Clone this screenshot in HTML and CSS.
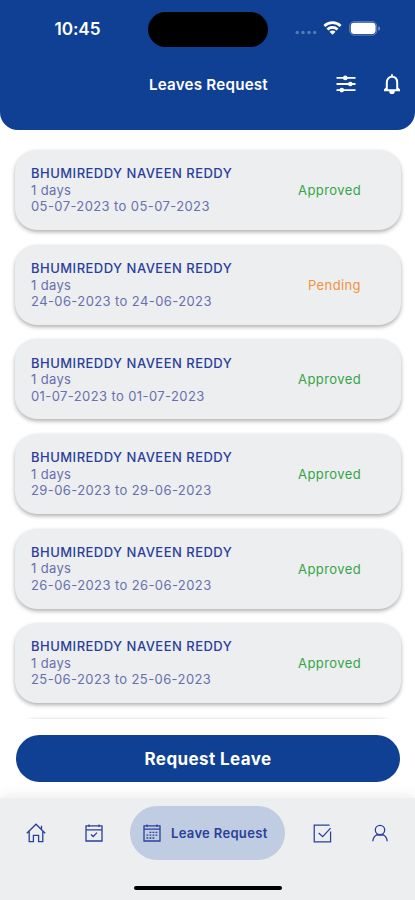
FILE: index.html
```html
<!DOCTYPE html>
<html lang="en">
<head>
    <meta charset="UTF-8">
    <meta name="viewport" content="width=device-width, initial-scale=1.0">
    <title>Leaves Request</title>
    <link rel="stylesheet" href="styles.css">
</head>
<body>

    <header class="header">
        <div class="status-bar">
            <span class="time">10:45</span>
            <div class="island"></div>
            <div class="status-icons">
                <svg class="signal" width="22" height="5" viewBox="0 0 22 5" fill="#fff" opacity=".3">
                    <circle cx="2.2" cy="2.5" r="1.7"/><circle cx="8" cy="2.5" r="1.7"/><circle cx="14" cy="2.5" r="1.7"/><circle cx="19.7" cy="2.5" r="1.7"/>
                </svg>
                <svg class="wifi" width="19" height="14" viewBox="0 0 20 15" fill="none" stroke="#fff" stroke-width="3">
                    <path d="M1.3 5.3a12.6 12.6 0 0 1 17.4 0"/>
                    <path d="M4.6 9a7.8 7.8 0 0 1 10.8 0"/>
                    <path d="M10 14.6 6.8 11.6a4.5 4.5 0 0 1 6.4 0z" fill="#fff" stroke="none"/>
                </svg>
                <svg class="battery" width="32" height="15" viewBox="0 0 32 15">
                    <rect x=".7" y=".7" width="27" height="13.4" rx="4.2" fill="none" stroke="#fff" stroke-opacity=".35"/>
                    <rect x="1.8" y="1.8" width="24.8" height="11.2" rx="3.4" fill="#fff"/>
                    <path d="M29.3 5.2v4.6c1-.4 1.6-1.2 1.6-2.3s-.6-1.9-1.6-2.3z" fill="#fff" opacity=".5"/>
                </svg>
            </div>
        </div>
        <div class="title-bar">
            <h1>Leaves Request</h1>
            <div class="actions">
                <svg width="20" height="18" viewBox="0 0 20 18" fill="#fff">
                    <path d="M.5 2h19v1.8H.5zM.5 8.1h19v1.8H.5zM.5 14.2h19V16H.5z"/>
                    <circle cx="9.3" cy="2.9" r="2.3"/><circle cx="14.3" cy="9" r="2.3"/><circle cx="5.8" cy="15.1" r="2.3"/>
                </svg>
                <svg width="18" height="22" viewBox="0 0 18 22" fill="none" stroke="#fff" stroke-width="2">
                    <path d="M1 17.2h16M3.8 16.8V9.7C3.8 6 6 3.8 9 3.8s5.2 2.2 5.2 5.9v7.1M2 17l2-2.4M16 17l-2-2.4"/>
                    <path d="M7.2 18.4h3.6a1.8 1.8 0 0 1-3.6 0zM9 1.2v2.6" stroke-width="1.8" fill="#fff"/>
                </svg>
            </div>
        </div>
    </header>

    <main class="leave-list">
        <div class="card">
            <div class="info">
                <h2>BHUMIREDDY NAVEEN REDDY</h2>
                <p class="days">1 days</p>
                <p>05-07-2023 to 05-07-2023</p>
            </div>
            <span class="status approved">Approved</span>
        </div>
        <div class="card">
            <div class="info">
                <h2>BHUMIREDDY NAVEEN REDDY</h2>
                <p class="days">1 days</p>
                <p>24-06-2023 to 24-06-2023</p>
            </div>
            <span class="status pending">Pending</span>
        </div>
        <div class="card">
            <div class="info">
                <h2>BHUMIREDDY NAVEEN REDDY</h2>
                <p class="days">1 days</p>
                <p>01-07-2023 to 01-07-2023</p>
            </div>
            <span class="status approved">Approved</span>
        </div>
        <div class="card">
            <div class="info">
                <h2>BHUMIREDDY NAVEEN REDDY</h2>
                <p class="days">1 days</p>
                <p>29-06-2023 to 29-06-2023</p>
            </div>
            <span class="status approved">Approved</span>
        </div>
        <div class="card">
            <div class="info">
                <h2>BHUMIREDDY NAVEEN REDDY</h2>
                <p class="days">1 days</p>
                <p>26-06-2023 to 26-06-2023</p>
            </div>
            <span class="status approved">Approved</span>
        </div>
        <div class="card">
            <div class="info">
                <h2>BHUMIREDDY NAVEEN REDDY</h2>
                <p class="days">1 days</p>
                <p>25-06-2023 to 25-06-2023</p>
            </div>
            <span class="status approved">Approved</span>
        </div>
        <div class="card"></div>
    </main>

    <button class="request-btn">Request Leave</button>

    <footer class="footer">
        <nav class="tabs">
            <a class="tab">
                <svg width="20" height="20" viewBox="0 0 20 20">
                    <path d="M.8 10.2 10 1.2l9.2 9M3.2 8.5v10.2h4.2v-6.3h5.2v6.3h4.2V8.5M15.5 6V2.8"/>
                </svg>
            </a>
            <a class="tab">
                <svg width="18" height="18" viewBox="0 0 18 18">
                    <path d="M1 1.8h16v15.2H1zM1 5.8h16M4 .5v2.6M14 .5v2.6M6 10.6l2.2 2 3.8-4"/>
                </svg>
            </a>
            <a class="tab active">
                <svg width="18" height="18" viewBox="0 0 18 18">
                    <path d="M1 1.8h16v15.2H1zM1 5.2h16M4 .5v2.6M14 .5v2.6"/>
                    <path d="M6.5 8.3h8M3.5 11.2h11M3.5 14h8" stroke-dasharray="1.8 1.2"/>
                </svg>
                <span>Leave Request</span>
            </a>
            <a class="tab">
                <svg width="19" height="19" viewBox="0 0 20 20">
                    <path d="M17.5 1.3H1.3v17.4h17.2V8M6 9.4l4.2 4L18.5 4.4"/>
                </svg>
            </a>
            <a class="tab">
                <svg width="18" height="18" viewBox="0 0 18 18">
                    <circle cx="9" cy="6" r="4.7"/>
                    <path d="M1.8 17.2c.3-3.5 2-5.6 4.6-7M16.2 17.2c-.3-3.5-2-5.6-4.6-7M5.5 11.2h7"/>
                </svg>
            </a>
        </nav>
        <div class="home-indicator"></div>
    </footer>

</body>
</html>
```
FILE: styles.css
```css
:root {
    --primary-color: #0f4094;
    --text-color: #29409a;
    --text-light-color: #6870ad;
    --card-bg-color: #eceef0;
    --approved-color: #35a545;
    --pending-color: #f39239;
}

* {
    margin: 0;
    padding: 0;
    box-sizing: border-box;
}

body {
    width: 415px;
    height: 900px;
    display: flex;
    flex-direction: column;
    overflow: hidden;
    background: #fff;
    font-family: Inter, "Liberation Sans", sans-serif;
}

svg {
    display: block;
}

/* Header */
.header {
    height: 130px;
    flex: none;
    background: var(--primary-color);
    color: #fff;
    border-radius: 0 0 18px 18px;
}

.status-bar {
    display: grid;
    grid-template-columns: 148px 120px 1fr;
    align-items: center;
    height: 58px;
}

.time {
    padding: 0 0 1px 7px;
    text-align: center;
    font-size: 17.2px;
    font-weight: 600;
    letter-spacing: -0.1px;
}

.island {
    height: 35px;
    border-radius: 18px;
    background: #000;
}

.status-icons {
    display: flex;
    align-items: center;
    padding: 0 0 2px 27px;
}

.signal {
    margin-top: 8px;
}

.wifi {
    margin-left: 6px;
}

.battery {
    margin-left: 7px;
}

.title-bar {
    display: grid;
    grid-template-columns: 148px 120px 1fr;
    align-items: center;
    height: 52px;
}

.title-bar h1 {
    grid-column: 2;
    padding-left: 1px;
    font-size: 15.2px;
    font-weight: 600;
    letter-spacing: 0.2px;
    white-space: nowrap;
}

.actions {
    display: flex;
    justify-content: flex-end;
    align-items: center;
    gap: 27px;
    padding: 0 14px 0 0;
}

/* Leave cards */
.leave-list {
    display: flex;
    flex-direction: column;
    gap: 14.6px;
    height: 589px;
    flex: none;
    padding: 20.2px 14px 0 15px;
    overflow: hidden;
}

.card {
    display: flex;
    justify-content: space-between;
    align-items: center;
    height: 80px;
    flex: none;
    padding: 0 40px 0 16px;
    border-radius: 22px;
    background: var(--card-bg-color);
    box-shadow: 0 2px 4px rgba(0, 0, 0, 0.32);
}

.info {
    line-height: 16.5px;
}

.info h2 {
    color: var(--text-color);
    font-size: 13px;
    font-weight: 500;
    letter-spacing: 0.48px;
}

.info p {
    color: var(--text-light-color);
    font-size: 13px;
    letter-spacing: 0.4px;
}

.info .days {
    letter-spacing: 0.35px;
}

.status {
    font-size: 13px;
    letter-spacing: 0.4px;
}

.approved {
    color: var(--approved-color);
}

.pending {
    color: var(--pending-color);
}

/* Button */
.request-btn {
    height: 47px;
    flex: none;
    margin: 16px 15px 16px 16px;
    border: none;
    border-radius: 24px;
    background: var(--primary-color);
    color: #fff;
    font-family: inherit;
    font-size: 17px;
    font-weight: 700;
    letter-spacing: 0.4px;
}

/* Bottom tabs */
.footer {
    display: flex;
    flex-direction: column;
    align-items: center;
    height: 102px;
    flex: none;
    padding-top: 8px;
    background: var(--card-bg-color);
    box-shadow: 0 -2px 12px rgba(0, 0, 0, 0.08);
}

.tabs {
    display: grid;
    grid-template-columns: 58px 58px 7px 155px 74px 42px;
    justify-items: center;
    align-items: center;
    width: 100%;
    height: 54px;
    padding: 0 0 0 7px;
}

.tab svg {
    fill: none;
    stroke: var(--text-color);
    stroke-width: 1.3;
}

.active {
    grid-column: 4;
    display: flex;
    align-items: center;
    gap: 10px;
    width: 155px;
    height: 54px;
    padding-left: 13px;
    border-radius: 27px;
    background: #bfcce1;
    color: var(--text-color);
    font-size: 13px;
    font-weight: 600;
    letter-spacing: 0.33px;
    white-space: nowrap;
}

.home-indicator {
    width: 148px;
    height: 4px;
    margin-top: 26px;
    border-radius: 2px;
    background: #000;
}
```
